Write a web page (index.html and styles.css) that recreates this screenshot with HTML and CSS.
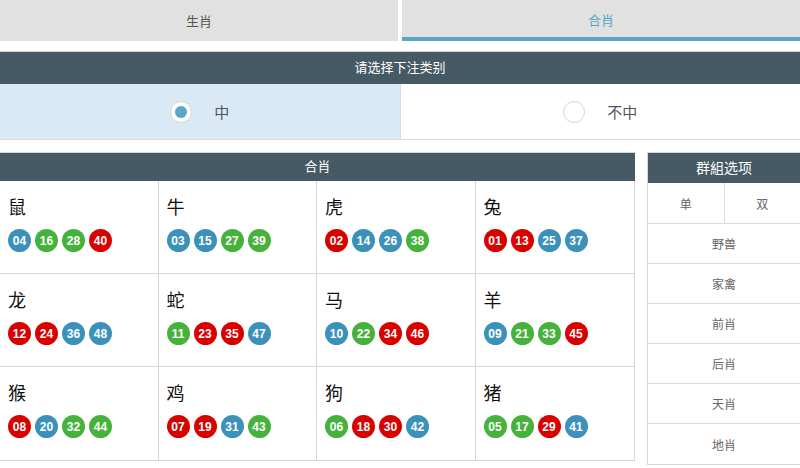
FILE: index.html
```html
<!DOCTYPE html>
<html lang="zh-CN">
<head>
  <meta charset="UTF-8" />
  <title>合肖</title>
  <link rel="stylesheet" href="styles.css">
</head>
<body>

  <div class="tabs">
    <div class="tab">生肖</div>
    <div class="tab active">合肖</div>
  </div>

  <div class="bet-type">
    <div class="bar">请选择下注类别</div>
    <div class="options">
      <label class="option selected"><span class="radio"></span><span>中</span></label>
      <label class="option"><span class="radio"></span><span>不中</span></label>
    </div>
  </div>

  <div class="main">
    <div class="panel zodiac-panel">
      <div class="bar">合肖</div>
      <div class="zodiac-grid">
        <div class="cell"><div class="animal">鼠</div><div class="balls"><span class="ball blue">04</span><span class="ball green">16</span><span class="ball green">28</span><span class="ball red">40</span></div></div>
        <div class="cell"><div class="animal">牛</div><div class="balls"><span class="ball blue">03</span><span class="ball blue">15</span><span class="ball green">27</span><span class="ball green">39</span></div></div>
        <div class="cell"><div class="animal">虎</div><div class="balls"><span class="ball red">02</span><span class="ball blue">14</span><span class="ball blue">26</span><span class="ball green">38</span></div></div>
        <div class="cell"><div class="animal">兔</div><div class="balls"><span class="ball red">01</span><span class="ball red">13</span><span class="ball blue">25</span><span class="ball blue">37</span></div></div>
        <div class="cell"><div class="animal">龙</div><div class="balls"><span class="ball red">12</span><span class="ball red">24</span><span class="ball blue">36</span><span class="ball blue">48</span></div></div>
        <div class="cell"><div class="animal">蛇</div><div class="balls"><span class="ball green">11</span><span class="ball red">23</span><span class="ball red">35</span><span class="ball blue">47</span></div></div>
        <div class="cell"><div class="animal">马</div><div class="balls"><span class="ball blue">10</span><span class="ball green">22</span><span class="ball red">34</span><span class="ball red">46</span></div></div>
        <div class="cell"><div class="animal">羊</div><div class="balls"><span class="ball blue">09</span><span class="ball green">21</span><span class="ball green">33</span><span class="ball red">45</span></div></div>
        <div class="cell"><div class="animal">猴</div><div class="balls"><span class="ball red">08</span><span class="ball blue">20</span><span class="ball green">32</span><span class="ball green">44</span></div></div>
        <div class="cell"><div class="animal">鸡</div><div class="balls"><span class="ball red">07</span><span class="ball red">19</span><span class="ball blue">31</span><span class="ball green">43</span></div></div>
        <div class="cell"><div class="animal">狗</div><div class="balls"><span class="ball green">06</span><span class="ball red">18</span><span class="ball red">30</span><span class="ball blue">42</span></div></div>
        <div class="cell"><div class="animal">猪</div><div class="balls"><span class="ball green">05</span><span class="ball green">17</span><span class="ball red">29</span><span class="ball blue">41</span></div></div>
      </div>
    </div>

    <div class="panel group-panel">
      <div class="bar">群組选项</div>
      <div class="group-row split">
        <div class="group-item">单</div>
        <div class="group-item">双</div>
      </div>
      <div class="group-row">野兽</div>
      <div class="group-row">家禽</div>
      <div class="group-row">前肖</div>
      <div class="group-row">后肖</div>
      <div class="group-row">天肖</div>
      <div class="group-row">地肖</div>
    </div>
  </div>

</body>
</html>
```

FILE: styles.css
```css
* {
  margin: 0;
  padding: 0;
  box-sizing: border-box;
}

body {
  background: #ffffff;
  color: #555;
  font-family: "Liberation Sans", "Noto Sans CJK SC", sans-serif;
  font-size: 13px;
}

/* Onglets */
.tabs {
  display: flex;
  gap: 4px;
  height: 41px;
}

.tab {
  flex: 1;
  background: #e1e1e1;
  display: flex;
  align-items: center;
  justify-content: center;
  color: #555;
  font-size: 13px;
  padding-bottom: 1px;
}

.tab.active {
  color: #5aa5c6;
  border-bottom: 4px solid #5ba5c5;
  padding-bottom: 0;
  padding-top: 2px;
}

.bar {
  background: #455a64;
  color: #fff;
  text-align: center;
  border-top: 1px solid #d6d6d6;
  font-size: 13px;
}

/* Type de mise */
.bet-type {
  margin-top: 10px;
}

.bet-type .bar {
  height: 33px;
  line-height: 32px;
}

.options {
  display: flex;
  height: 56px;
  border-bottom: 1px solid #dcdcdc;
}

.option {
  flex: 1;
  display: flex;
  align-items: center;
  justify-content: center;
  gap: 22px;
  font-size: 15px;
  color: #555;
}

.option.selected {
  background: #dae9f6;
  border-right: 1px solid #dcdcdc;
}

.radio {
  width: 22px;
  height: 22px;
  border-radius: 50%;
  border: 1px solid #d6d6d6;
  background: #fff;
  display: flex;
  align-items: center;
  justify-content: center;
}

.option.selected .radio::after {
  content: "";
  width: 12px;
  height: 12px;
  border-radius: 50%;
  background: #5ba5c5;
}

/* Zone principale */
.main {
  display: flex;
  gap: 12px;
  margin-top: 12px;
}

.zodiac-panel {
  width: 635px;
}

.zodiac-panel .bar {
  height: 29px;
  line-height: 28px;
}

.zodiac-grid {
  display: grid;
  grid-template-columns: repeat(4, 1fr);
  border-right: 1px solid #d6d6d6;
  border-bottom: 1px solid #d6d6d6;
}

.cell {
  height: 93px;
  border-right: 1px solid #d6d6d6;
  border-bottom: 1px solid #d6d6d6;
  padding: 12px 8px 0;
}

.cell:nth-child(4n) {
  border-right: none;
}

.cell:nth-last-child(-n+4) {
  border-bottom: none;
}

.animal {
  font-size: 18px;
  color: #111;
  line-height: 26px;
  font-family: "Noto Sans CJK SC", sans-serif;
}

.balls {
  display: flex;
  gap: 4px;
  margin-top: 10px;
}

.ball {
  width: 23px;
  height: 23px;
  border-radius: 50%;
  color: #fff;
  font-weight: bold;
  font-size: 12px;
  display: flex;
  align-items: center;
  justify-content: center;
}

.ball.blue { background: #3c91bb; }
.ball.green { background: #45b23c; }
.ball.red { background: #d90000; }

/* Groupes */
.group-panel {
  flex: 1;
  border-left: 1px solid #d6d6d6;
  border-bottom: 1px solid #d6d6d6;
}

.group-panel .bar {
  height: 31px;
  line-height: 30px;
  font-size: 14px;
}

.group-row {
  height: 40px;
  border-bottom: 1px solid #dcdcdc;
  display: flex;
  align-items: center;
  justify-content: center;
  font-size: 12px;
  color: #666;
}

.group-row:last-child {
  border-bottom: none;
}

.group-row.split {
  height: 41px;
}

.group-item {
  flex: 1;
  height: 100%;
  display: flex;
  align-items: center;
  justify-content: center;
}

.group-item + .group-item {
  border-left: 1px solid #dcdcdc;
}
```
